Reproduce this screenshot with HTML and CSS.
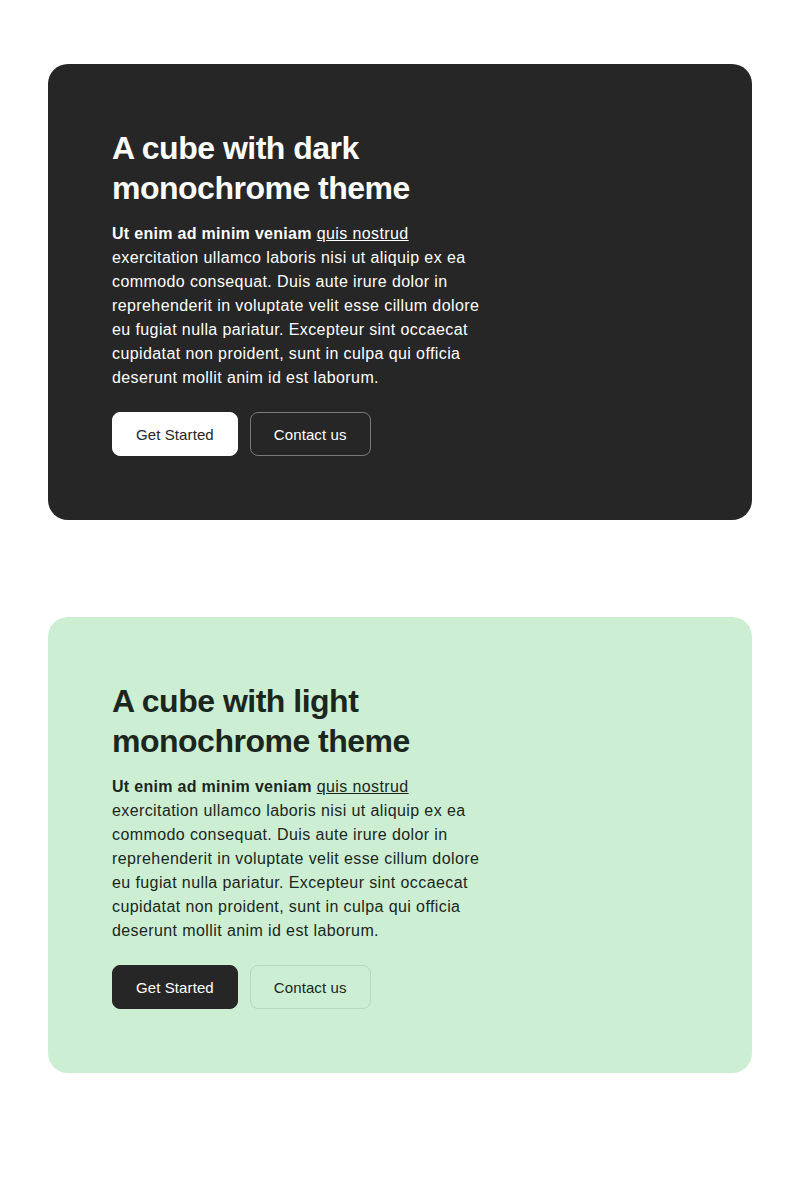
FILE: index.html
```html
<!DOCTYPE html>
<html>
<head>
<meta charset="utf-8">
<link rel="stylesheet" href="styles.css">
</head>
<body>
<main class="page">
  <section class="cube cube--dark">
    <h2 class="cube__title">A cube with dark monochrome theme</h2>
    <p class="cube__text"><strong>Ut enim ad minim veniam</strong> <a href="#">quis nostrud</a> exercitation ullamco laboris nisi ut aliquip ex ea commodo consequat. Duis aute irure dolor in reprehenderit in voluptate velit esse cillum dolore eu fugiat nulla pariatur. Excepteur sint occaecat cupidatat non proident, sunt in culpa qui officia deserunt mollit anim id est laborum.</p>
    <div class="cube__actions">
      <a class="btn btn--primary" href="#">Get Started</a>
      <a class="btn btn--outline" href="#">Contact us</a>
    </div>
  </section>
  <section class="cube cube--light">
    <h2 class="cube__title">A cube with light monochrome theme</h2>
    <p class="cube__text"><strong>Ut enim ad minim veniam</strong> <a href="#">quis nostrud</a> exercitation ullamco laboris nisi ut aliquip ex ea commodo consequat. Duis aute irure dolor in reprehenderit in voluptate velit esse cillum dolore eu fugiat nulla pariatur. Excepteur sint occaecat cupidatat non proident, sunt in culpa qui officia deserunt mollit anim id est laborum.</p>
    <div class="cube__actions">
      <a class="btn btn--primary" href="#">Get Started</a>
      <a class="btn btn--outline" href="#">Contact us</a>
    </div>
  </section>
</main>
</body>
</html>
```
FILE: styles.css
```css
* { box-sizing: border-box; }
body {
  margin: 0;
  background: #ffffff;
  font-family: "Liberation Sans", Arial, sans-serif;
}
.page {
  padding: 64px 48px;
  display: flex;
  flex-direction: column;
  gap: 97px;
}
.cube {
  border-radius: 20px;
  padding: 64px;
  height: 456px;
}
.cube__title {
  margin: 0;
  max-width: 384px;
  font-size: 32px;
  line-height: 40px;
  font-weight: 700;
  letter-spacing: -0.5px;
}
.cube__text {
  margin: 14px 0 0;
  max-width: 384px;
  font-size: 16px;
  line-height: 24px;
  letter-spacing: 0.4px;
}
.cube__text strong { font-weight: 700; letter-spacing: 0.3px; }
.cube__text a { color: inherit; text-decoration: underline; }
.cube__actions {
  margin-top: 22px;
  display: flex;
  gap: 12px;
}
.btn {
  display: inline-flex;
  align-items: center;
  justify-content: center;
  height: 44px;
  padding: 0 23px;
  border-radius: 8px;
  font-size: 15px;
  letter-spacing: 0.1px;
  text-decoration: none;
  border: 1px solid transparent;
}
.cube--dark { background: #262626; color: #ffffff; }
.cube--dark .btn--primary { background: #ffffff; color: #262626; border-color: #ffffff; }
.cube--dark .btn--outline { color: #ffffff; border-color: #7a7a7a; }
.cube--light { background: #ccefd3; color: #1b261d; }
.cube--light .btn--primary { background: #262626; color: #ffffff; border-color: #262626; }
.cube--light .btn--outline { color: #1b261d; border-color: #b2d9ba; }
```
